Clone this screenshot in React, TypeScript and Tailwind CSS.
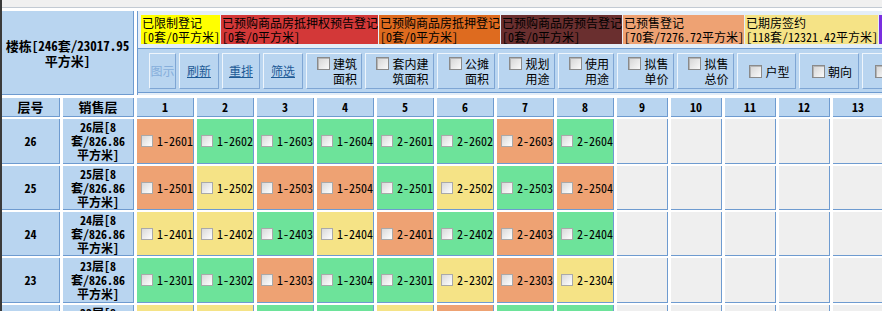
import React from 'react';

type Tone = 'o' | 'g' | 'y';

const toneClass: Record<Tone, string> = {
  o: 'bg-[#eea273]',
  g: 'bg-[#6de39a]',
  y: 'bg-[#f5e386]',
};

const legend = [
  { w: 'w-[79px]', bg: 'bg-[#ffff00]', title: '已限制登记', sum: '[0套/0平方米]', fg: 'text-black' },
  { w: 'w-[157px]', bg: 'bg-[#d33838]', title: '已预购商品房抵押权预告登记', sum: '[0套/0平方米]', fg: 'text-black' },
  { w: 'w-[121px]', bg: 'bg-[#de6b1f]', title: '已预购商品房抵押登记', sum: '[0套/0平方米]', fg: 'text-black' },
  { w: 'w-[121px]', bg: 'bg-[#6a2f2f]', title: '已预购商品房预告登记', sum: '[0套/0平方米]', fg: 'text-black' },
  { w: 'w-[121px]', bg: 'bg-[#eea273]', title: '已预售登记', sum: '[70套/7276.72平方米]', fg: 'text-black' },
  { w: 'w-[133px]', bg: 'bg-[#f5e386]', title: '已期房签约', sum: '[118套/12321.42平方米]', fg: 'text-black' },
  { w: 'w-[60px]', bg: 'bg-[#7a2ee0]', title: '', sum: '', fg: 'text-white' },
];

const links = [
  { w: 'w-[27px]', label: '图示', off: true },
  { w: 'w-[40px]', label: '刷新' },
  { w: 'w-[38px]', label: '重排' },
  { w: 'w-[40px]', label: '筛选' },
];

const filters = [
  { w: 'w-[56px]', lines: ['建筑', '面积'] },
  { w: 'w-[69px]', lines: ['套内建', '筑面积'] },
  { w: 'w-[58px]', lines: ['公摊', '面积'] },
  { w: 'w-[57px]', lines: ['规划', '用途'] },
  { w: 'w-[56px]', lines: ['使用', '用途'] },
  { w: 'w-[57px]', lines: ['拟售', '单价'] },
  { w: 'w-[57px]', lines: ['拟售', '总价'] },
  { w: 'w-[59px]', lines: ['户型'] },
  { w: 'w-[60px]', lines: ['朝向'] },
  { w: 'w-[60px]', lines: ['装修'] },
];

const floors: { floor: number; h: string; tones: Tone[] }[] = [
  { floor: 26, h: 'h-[45px]', tones: ['o', 'g', 'g', 'g', 'g', 'g', 'o', 'g'] },
  { floor: 25, h: 'h-[44px]', tones: ['o', 'y', 'o', 'o', 'g', 'y', 'g', 'o'] },
  { floor: 24, h: 'h-[44px]', tones: ['y', 'y', 'g', 'y', 'o', 'g', 'o', 'g'] },
  { floor: 23, h: 'h-[45px]', tones: ['g', 'g', 'o', 'g', 'g', 'y', 'o', 'y'] },
  { floor: 22, h: 'h-[45px]', tones: ['y', 'y', 'g', 'g', 'y', 'o', 'g', 'g'] },
];

const cell = 'border-r border-b border-[#6e9bd0]';

function UnitBox() {
  return (
    <span className="inline-block h-[12px] w-[12px] shrink-0 border border-[#a9a9a9] bg-linear-to-br from-[#d9d9d9] to-white" />
  );
}

function ToolBox() {
  return (
    <span className="mt-px inline-block h-[13px] w-[13px] shrink-0 border border-[#8a8a8a] bg-linear-to-br from-[#d4d4d4] to-[#fafafa] shadow-[inset_1px_1px_0_#b5b5b5]" />
  );
}

const btn =
  'flex h-[36px] shrink-0 items-center justify-center border border-t-[#eef5fc] border-l-[#eef5fc] border-r-[#7fa6d4] border-b-[#7fa6d4]';

export default function App() {
  return (
    <div className="flex h-[311px] w-[882px] overflow-hidden bg-white font-['Noto_Sans_Mono_CJK_SC','Noto_Sans_CJK_SC',sans-serif] text-[12px] leading-[14px] text-black">
      <div className="w-[2px] shrink-0 bg-[#3a3a3a]" />

      <div className="flex min-w-0 flex-1 flex-col">
        <div className="h-[8px] shrink-0 border-b border-[#c2cad3] bg-[#f0f0f0]" />

        {/* header: building summary + legend + toolbar */}
        <div className="mt-[3px] flex h-[84px] shrink-0 gap-[3px]">
          <div className={`flex w-[132px] shrink-0 items-center justify-center bg-[#b9d5f0] text-center text-[13px] font-bold leading-[15px] ${cell}`}>
            <span className="whitespace-nowrap">
              楼栋[246套/23017.95
              <br />
              平方米]
            </span>
          </div>

          <div className="flex min-w-0 flex-1 flex-col border-l border-[#6e9bd0] bg-[#e4eef8] pt-[4px]">
            <div className="flex h-[29px] gap-px pl-[3px]">
              {legend.map((l, i) => (
                <div key={i} className={`${l.w} ${l.bg} ${l.fg} shrink-0 overflow-hidden whitespace-nowrap pl-px pt-px`}>
                  <div>{l.title}</div>
                  <div>{l.sum}</div>
                </div>
              ))}
            </div>

            <div className="mt-[4px] flex h-[45px] items-start gap-[3px] border-y border-[#6e9bd0] bg-[#b9d5f0] pl-[11px] pt-[4px]">
              {links.map((b) => (
                <div key={b.label} className={`${btn} ${b.w}`}>
                  <span className={b.off ? 'text-[#86aedb]' : 'text-[#1d5a96] underline'}>{b.label}</span>
                </div>
              ))}
              {filters.map((f, i) => (
                <div key={i} className={`${btn} ${f.w} pl-[6px]`}>
                  <div className="flex items-start gap-[3px]">
                    <ToolBox />
                    <div className="leading-[15px]">
                      {f.lines.map((ln) => (
                        <div key={ln}>{ln}</div>
                      ))}
                    </div>
                  </div>
                </div>
              ))}
            </div>
          </div>
        </div>

        {/* unit table */}
        <div className="mt-[3px] flex flex-col gap-[2px] font-bold">
          <div className="flex h-[19px] shrink-0 gap-[3px]">
            <div className={`flex w-[58px] shrink-0 items-center justify-center bg-[#b9d5f0] text-[13px] ${cell}`}>层号</div>
            <div className={`flex w-[71px] shrink-0 items-center justify-center bg-[#b9d5f0] text-[13px] ${cell}`}>销售层</div>
            {Array.from({ length: 13 }, (_, i) => (
              <div
                key={i}
                className={`flex shrink-0 items-center justify-center bg-[#b9d5f0] ${i < 8 ? 'w-[57px]' : 'w-[51px]'} ${cell}`}
              >
                {i + 1}
              </div>
            ))}
          </div>

          {floors.map((f) => (
            <div key={f.floor} className={`flex shrink-0 gap-[3px] ${f.h}`}>
              <div className={`flex w-[58px] shrink-0 items-center justify-center bg-[#b9d5f0] ${cell}`}>{f.floor}</div>
              <div className={`flex w-[71px] shrink-0 items-center justify-center bg-[#b9d5f0] text-center ${cell}`}>
                <span className="whitespace-nowrap">
                  {f.floor}层[8
                  <br />
                  套/826.86
                  <br />
                  平方米]
                </span>
              </div>
              {f.tones.map((t, i) => (
                <div
                  key={i}
                  className={`flex w-[57px] shrink-0 items-center gap-[4px] pl-[4px] font-normal ${toneClass[t]} ${cell}`}
                >
                  <UnitBox />
                  <span className="whitespace-nowrap">
                    {i < 4 ? 1 : 2}-{f.floor}0{(i % 4) + 1}
                  </span>
                </div>
              ))}
              {Array.from({ length: 5 }, (_, i) => (
                <div key={`e${i}`} className={`w-[51px] shrink-0 bg-[#efefef] ${cell}`} />
              ))}
            </div>
          ))}
        </div>
      </div>
    </div>
  );
}
